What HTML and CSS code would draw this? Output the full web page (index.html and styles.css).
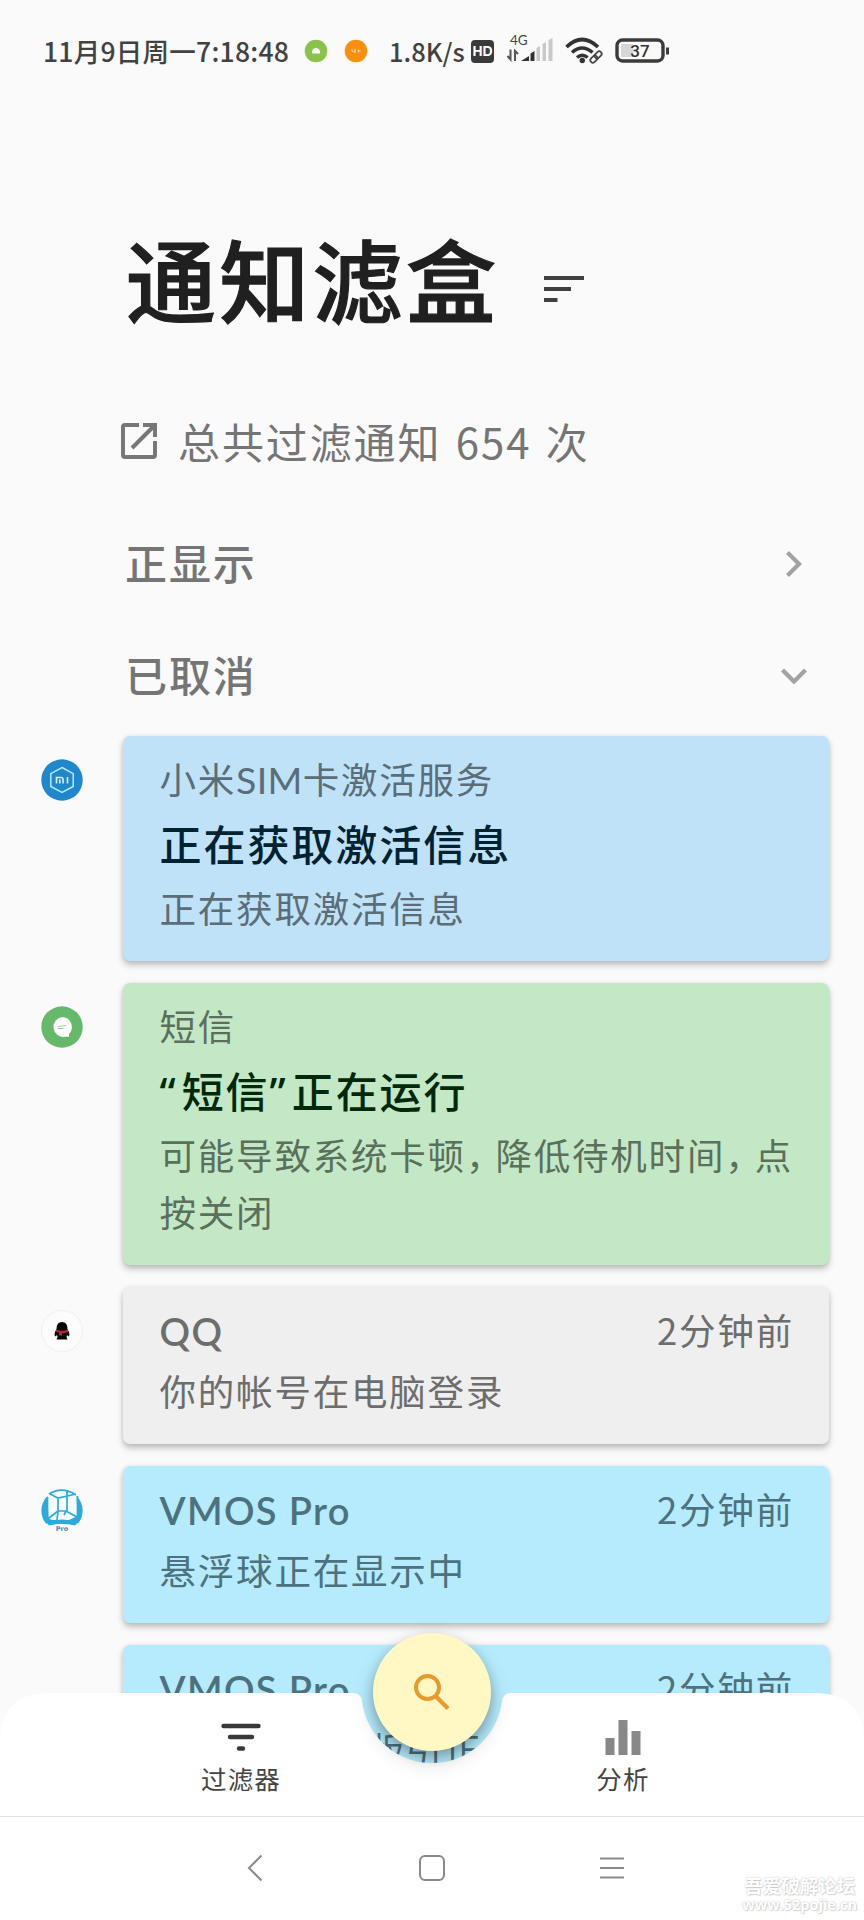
FILE: index.html
```html
<!DOCTYPE html>
<html lang="zh-CN">
<head>
<meta charset="utf-8">
<title>通知滤盒</title>
<link rel="stylesheet" href="styles.css">
</head>
<body>
<div class="screen">
  <header class="status">
    <span class="clock">11月9日周一7:18:48</span>
    <svg class="dot-green" width="24" height="24" viewBox="0 0 24 24"><circle cx="12" cy="12" r="11.3" fill="#8bc34a"/><path d="M8 11.5Q12 6 16 11.5v3H8z" fill="#fff"/></svg>
    <svg class="dot-orange" width="24" height="24" viewBox="0 0 24 24"><circle cx="12" cy="12" r="11.3" fill="#f7900f"/><path d="M8 10v2q1.500 1.500 3 0v-2M11 12v2M13.500 12h3M14.500 10.500v3" stroke="#ffe0b2" fill="none"/></svg>
    <span class="speed">1.8K/s</span>
    <span class="hd">HD</span>
    <svg class="signal" width="48" height="32" viewBox="0 0 48 32">
      <text class="net" x="4" y="13">4G</text>
      <path d="M4.500 17.500v10L1.500 24M9 29V19l3 3" fill="none" stroke="#555" stroke-width="2"/>
      <path d="M15 29l8-5v5zM24.500 21.500l4-2.500v10h-4z" fill="#333"/>
      <path d="M30.500 16l3.500-2v15h-3.500zM36.500 12l3.500-2v19h-3.500zM42.500 8l4-2v23h-4z" fill="#c9c9c9"/>
    </svg>
    <svg class="wifi" width="40" height="28" viewBox="0 0 40 28">
      <g fill="none" stroke="#333" stroke-width="3.600"><path d="M1.500 10Q17 -5 33 10"/><path d="M7 15.500q10-9 20.500 0"/><path d="M12 20.500q5.300-4.500 10.600 0"/></g>
      <circle cx="17.300" cy="23.500" r="2.700" fill="#333"/>
      <g fill="#fafafa" stroke="#444" stroke-width="1.700" transform="rotate(-45 31 20)"><rect x="24" y="17.500" width="8" height="5" rx="2.500"/><rect x="30" y="17.500" width="8" height="5" rx="2.500" fill="none"/></g>
    </svg>
    <svg class="battery" width="56" height="26" viewBox="0 0 56 26">
      <rect x="2" y="2" width="46" height="21" rx="5.500" fill="#fafafa" stroke="#3b3b3b" stroke-width="3.400"/>
      <path d="M6 6h12v13H6z" fill="#d7d7d7"/><path d="M52.500 9.500v7" stroke="#3b3b3b" stroke-width="3"/>
      <text class="level" x="25" y="18.500">37</text>
    </svg>
  </header>

  <main>
    <div class="title-row">
      <h1>通知滤盒</h1>
      <svg width="42" height="28" viewBox="0 0 42 28"><path d="M1 3h40M1 14h27M1 25h13.500" stroke="#404040" stroke-width="4.200"/></svg>
    </div>
    <div class="summary">
      <svg width="38" height="38" viewBox="0 0 38 38"><path d="M19 3H5Q3 3 3 5v28q0 2 2 2h28q2 0 2-2V19M23 3h12v12M34 4L12 26" fill="none" stroke="#777" stroke-width="4"/></svg>
      <span>总共过滤通知 654 次</span>
    </div>
    <div class="section">
      <span>正显示</span>
      <svg width="28" height="28" viewBox="0 0 28 28"><path d="M7.500 2.500L19 14 7.500 25.500" fill="none" stroke="#a2a2a2" stroke-width="4.200"/></svg>
    </div>
    <div class="section">
      <span>已取消</span>
      <svg width="28" height="28" viewBox="0 0 28 28"><path d="M2.500 8L14 19.500 25.500 8" fill="none" stroke="#a2a2a2" stroke-width="4.200"/></svg>
    </div>

    <div class="list">
      <div class="item">
        <svg class="avatar" viewBox="0 0 42 42"><circle cx="21" cy="21" r="20.700" fill="#1f87cb"/><path d="M21 8.500l11.200 6.200v12.800L21 33.500 9.800 27.500V14.700z" fill="none" stroke="#b8e6fa" stroke-width="1.500"/><path d="M15.500 24.500v-6h4.500q2 0 2 2v4M18.800 20.500v4M26.500 18v6.500" fill="none" stroke="#d5f1fc" stroke-width="1.600"/></svg>
        <article class="card blue">
          <p>小米<span class="latin">SIM</span>卡激活服务</p>
          <h2>正在获取激活信息</h2>
          <p>正在获取激活信息</p>
        </article>
      </div>
      <div class="item">
        <svg class="avatar" viewBox="0 0 42 42"><circle cx="21" cy="21" r="20.700" fill="#66b96a"/><path d="M21 11a10 10 0 1 0 3 19.800h4V28A10 10 0 0 0 21 11z" fill="#fff"/><path d="M17 20.500l8-1M16.500 22.500h6" stroke="#8bc98e" stroke-width=".9"/></svg>
        <article class="card green">
          <p>短信</p>
          <h2><span class="quote">“</span>短信<span class="quote">”</span>正在运行</h2>
          <p>可能导致系统卡顿<span class="comma">，</span>降低待机时间<span class="comma">，</span>点按关闭</p>
        </article>
      </div>
      <div class="item">
        <svg class="avatar" viewBox="0 0 42 42"><circle cx="21" cy="21" r="20.500" fill="#fcfcfc" stroke="#f0f0f0"/><path d="M15.500 19q0-7 5.500-7t5.500 7q1.500 2 2 6l-1 1.500-1.500-1.500-.5 2 1 2.500h-11l1-2.500-.5-2-1.500 1.500-1-1.500q.5-4 2-6z" fill="#080808"/><path d="M15 19.500q6 2.500 12 0v2.500q-4 1.500-6 1v2.500h-3v-3l-3-1z" fill="#b82635"/></svg>
        <article class="card gray">
          <div class="head"><h3>QQ</h3><time>2分钟前</time></div>
          <p>你的帐号在电脑登录</p>
        </article>
      </div>
      <div class="item">
        <svg class="avatar" viewBox="0 0 42 42">
          <path d="M6.500 7A20.500 20.500 0 0 0 5 34.500Q21 30 37 34.500A20.500 20.500 0 0 0 35.500 7z" fill="#2babdc"/>
          <path d="M6.500 7L21 1l14.500 6 1 20-10 7-19-4z" fill="#f7fdff"/>
          <path d="M8 5Q21-3 35 6M9 5l8 4 18-4M17 9v13L6 30.500M17 22h8L36 28M26 1v21M6.500 8v23l17 3 13-6V7M17 22l-1 9M25 22l-2 4" fill="none" stroke="#2babdc" stroke-width="1.700"/>
          <path d="M5 33Q21 28 37 33l-3 3.500Q21 33 8 36.500z" fill="#2babdc"/>
          <text class="vm-label" x="21" y="41.500">Pro</text>
        </svg>
        <article class="card cyan">
          <div class="head"><h3>VMOS Pro</h3><time>2分钟前</time></div>
          <p>悬浮球正在显示中</p>
        </article>
      </div>
      <div class="item">
        <span class="avatar"></span>
        <article class="card cyan">
          <div class="head"><h3>VMOS Pro</h3><time>2分钟前</time></div>
          <p><span class="app-name">VMOS Pro</span>版引正在运行</p>
        </article>
      </div>
    </div>
  </main>

  <nav class="tabbar">
    <svg class="bar-shape" viewBox="0 0 864 227"><path d="M0 50Q0 0 50 0H353Q361 0 362 8A70.500 70.500 0 0 0 502 8Q503 0 511 0H814Q864 0 864 50V227H0z" fill="#fff"/></svg>
    <div class="tabs">
      <div class="tab">
        <svg width="44" height="38" viewBox="0 0 44 38"><path d="M4.500 8h35M11 19h22M20 30.500h4" stroke="#393939" stroke-width="4.400" stroke-linecap="round"/></svg>
        <span>过滤器</span>
      </div>
      <div class="tab">
        <svg width="44" height="38" viewBox="0 0 44 38"><path d="M4.500 20h9v17h-9zM17.500 2h9v35h-9zM30.500 13h9v24h-9z" fill="#888"/></svg>
        <span>分析</span>
      </div>
    </div>
    <div class="system">
      <svg width="28" height="28" viewBox="0 0 28 28"><path d="M20.500 1.500L8 14 20.500 26.500" fill="none" stroke="#8a8a8a" stroke-width="2"/></svg>
      <svg class="home" width="28" height="28" viewBox="0 0 28 28"><rect x="2" y="2" width="24" height="24" rx="5" fill="none" stroke="#8a8a8a" stroke-width="2"/></svg>
      <svg width="28" height="28" viewBox="0 0 28 28"><path d="M2 4.500h24M2 14h24M2 23.500h24" stroke="#8a8a8a" stroke-width="2"/></svg>
    </div>
    <div class="fab"><svg width="40" height="40" viewBox="0 0 40 40"><circle cx="15.500" cy="15.500" r="11.500" fill="none" stroke="#e79b2d" stroke-width="4"/><path d="M23.500 24L36 36.500" stroke="#e79b2d" stroke-width="4.200"/></svg></div>
    <div class="mark"><b>吾爱破解论坛</b><span>www.52pojie.cn</span></div>
  </nav>
</div>
</body>
</html>
```
FILE: styles.css
```css
* { box-sizing: border-box; }
body { margin: 0; background: #fafafa; }
h1, h2, h3, p { margin: 0; }
svg { display: block; flex: none; }

.screen {
  position: relative;
  width: 864px;
  height: 1920px;
  overflow: hidden;
  background: #fafafa;
  font-family: "Noto Sans CJK SC", sans-serif;
  color: #757575;
}

.status {
  display: flex;
  align-items: center;
  height: 102px;
  padding-left: 43px;
  color: #424242;
  font: 500 26.500px/40px "Noto Sans CJK SC", sans-serif;
  white-space: nowrap;
}
.clock { width: 261px; letter-spacing: .25px; }
.dot-orange { margin-left: 16px; }
.speed { width: 80px; margin-left: 21px; font-size: 25.500px; }
.hd {
  width: 23px;
  height: 23px;
  margin-left: 2px;
  border-radius: 4px;
  background: #3a3a3a;
  color: #fff;
  font: 700 14px/23px "Liberation Sans", sans-serif;
  text-align: center;
}
.signal { margin: -6px 0 0 12px; }
.net { font: 13.500px Lato, sans-serif; fill: #444; }
.wifi { margin-left: 11px; }
.battery { margin-left: 10px; }
.level { font: 500 17px Roboto, sans-serif; fill: #333; text-anchor: middle; }

.title-row {
  display: flex;
  align-items: center;
  height: 140px;
  margin-top: 110px;
  padding-left: 126px;
}
h1 {
  width: 417px;
  margin-top: -10px;
  color: #202020;
  font-size: 90px;
  font-weight: 500;
  line-height: 140px;
  letter-spacing: 3.300px;
  -webkit-text-stroke: 1.200px #202020;
}
.title-row svg { margin-top: 14px; }

.summary {
  display: flex;
  align-items: center;
  gap: 20px;
  height: 60px;
  margin-top: 59px;
  padding-left: 120px;
  font-size: 42px;
  line-height: 60px;
  letter-spacing: 1.900px;
  word-spacing: 3px;
}
.section {
  display: flex;
  align-items: center;
  justify-content: space-between;
  height: 112px;
  padding: 0 56px 0 125px;
  font-size: 42px;
  font-weight: 500;
  letter-spacing: 1.900px;
}
.section span { margin-top: -5px; }
.summary + .section { margin-top: 37px; }

.list { display: flex; flex-direction: column; gap: 22px; margin-top: 3.500px; }
.item { display: flex; padding-left: 41px; }
.avatar { flex: none; width: 42px; height: 42px; margin-top: 23px; }
.card {
  width: 706px;
  margin-left: 40px;
  padding: 14.500px 20px 24.500px 36.500px;
  border-radius: 7px;
  box-shadow: 0 4px 6px rgba(0, 0, 0, .24), 0 0 5px rgba(0, 0, 0, .07);
  font-size: 36.500px;
  line-height: 57px;
  letter-spacing: 1.800px;
}
.card h2 {
  font-size: 42px;
  font-weight: 500;
  line-height: 72px;
  letter-spacing: 1.950px;
}
.head {
  display: flex;
  justify-content: space-between;
  height: 57px;
  margin-bottom: 4px;
  padding-right: 15px;
}
.card h3 { font: 600 38px/61px Lato, sans-serif; letter-spacing: 1.350px; }
.latin { font-family: Lato, sans-serif; font-size: 37.500px; line-height: 0; letter-spacing: .3px; }
.quote { font-family: "Noto Sans", sans-serif; line-height: 0; letter-spacing: 6px; }
.comma { letter-spacing: -7px; }
.app-name { margin-right: 27px; }
.blue { background: #c0e2f9; color: #5a6d78; }
.blue h2 { color: #002331; }
.green { background: #c4e8c6; color: #5a705c; }
.green h2 { color: #02290b; }
.gray { background: #efefef; color: #6d6d6d; }
.cyan { background: #b5ebfc; color: #4d717e; }
.vm-label { font: 700 6.500px "DejaVu Sans", sans-serif; fill: #3f8fae; text-anchor: middle; }

/* Bottom bar floats over the scrolling list */
.tabbar { position: absolute; left: 0; top: 1693px; width: 864px; height: 227px; }
.bar-shape { position: absolute; left: 0; top: 0; width: 864px; height: 227px; }
.tabs {
  position: relative;
  display: flex;
  justify-content: space-between;
  height: 124px;
  padding: 25px 171px 0 171px;
  border-bottom: 1px solid #e2e2e2;
}
.tab {
  display: flex;
  flex-direction: column;
  align-items: center;
  width: 140px;
  color: #444;
  font-size: 25.500px;
  line-height: 44px;
  letter-spacing: 1.200px;
}
.system {
  position: relative;
  display: flex;
  justify-content: space-between;
  padding: 37px 238px 0 241px;
}
.home { margin-right: 4px; }
.fab {
  position: absolute;
  left: 373px;
  top: -60px;
  display: flex;
  align-items: center;
  justify-content: center;
  width: 118px;
  height: 118px;
  border-radius: 50%;
  background: #fff8c4;
}
/* The shadow darkens the list inside the notch more than the bar below it */
.fab { box-shadow: 0 10px 22px rgba(0, 0, 0, .16), 0 5px 12px rgba(0, 0, 0, .24); }
.mark {
  position: absolute;
  right: 7px;
  bottom: 6px;
  display: flex;
  flex-direction: column;
  align-items: center;
  color: #fff;
  font-size: 18.500px;
  line-height: 22px;
  text-shadow: 0 0 2px #bbb, 1px 1px 1px #ddd;
}
.mark span { font: 700 14.500px/18px "Open Sans", sans-serif; }
```
